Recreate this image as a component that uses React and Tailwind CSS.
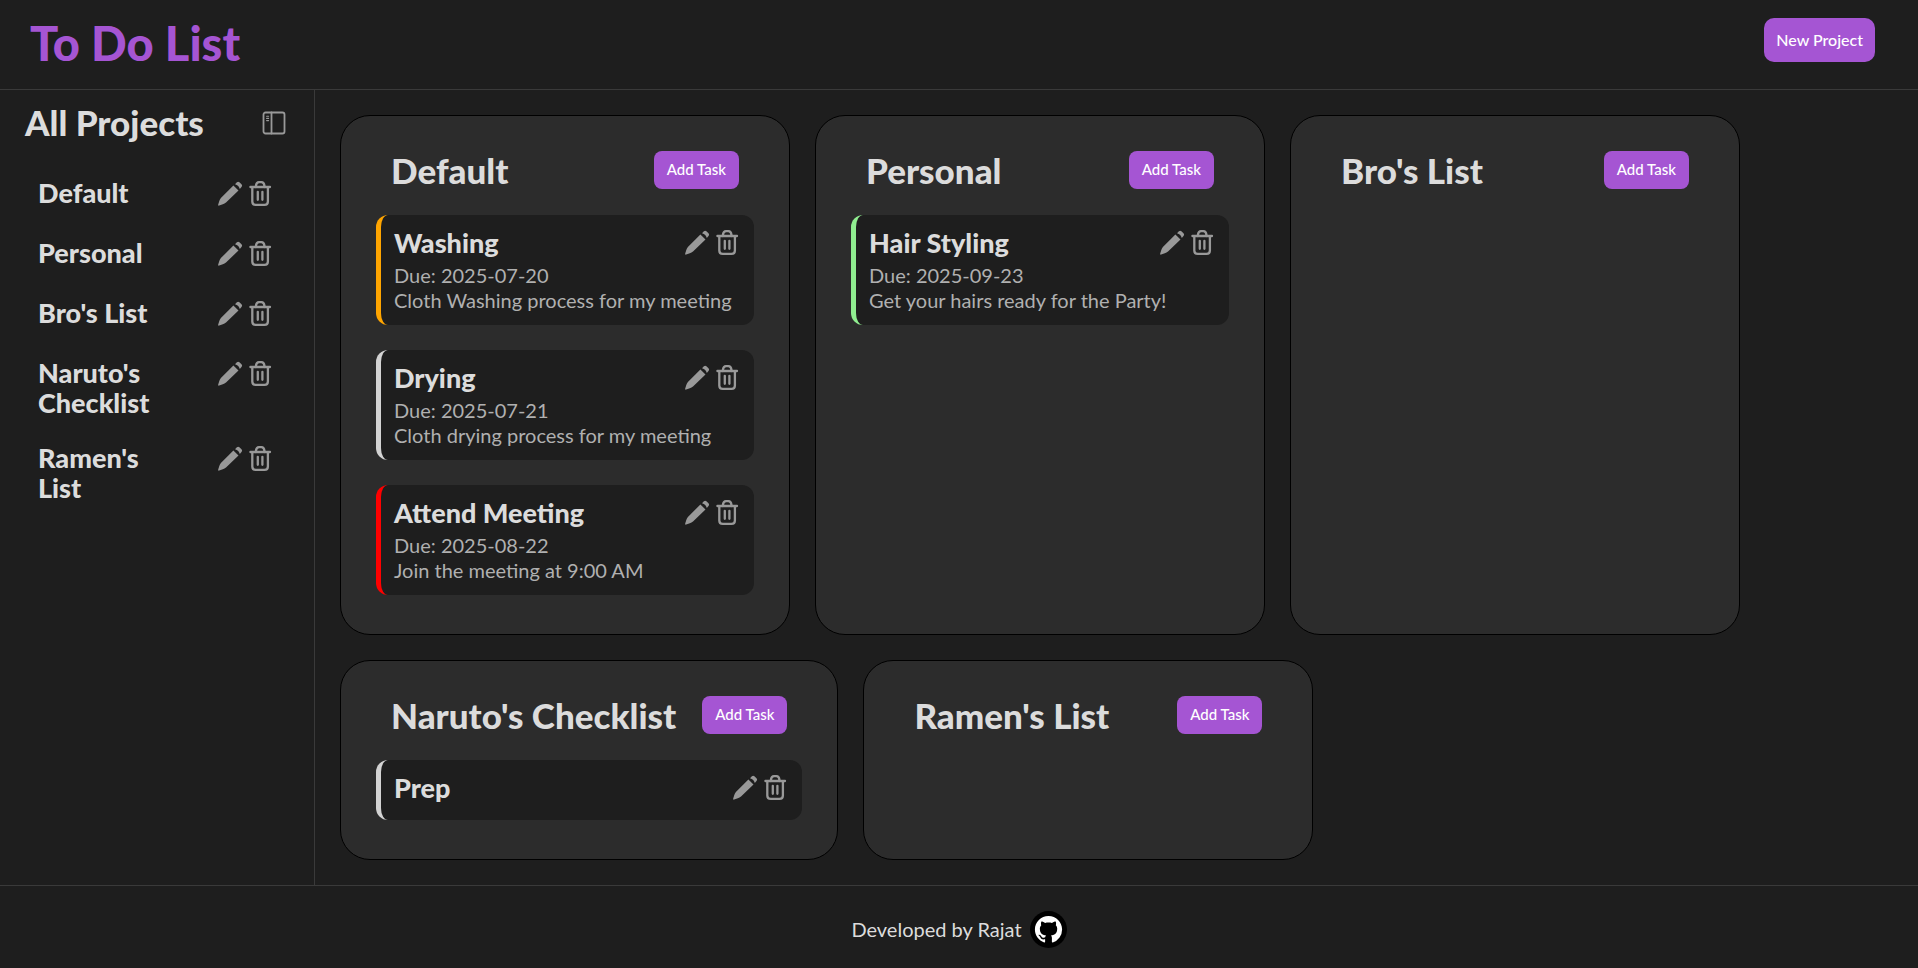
import React from "react";

const projects = [
  {
    name: "Default",
    tasks: [
      { title: "Washing", due: "2025-07-20", note: "Cloth Washing process for my meeting", edge: "border-l-[#ffa500]" },
      { title: "Drying", due: "2025-07-21", note: "Cloth drying process for my meeting", edge: "border-l-[#d3d3d3]" },
      { title: "Attend Meeting", due: "2025-08-22", note: "Join the meeting at 9:00 AM", edge: "border-l-[#ff0000]" },
    ],
  },
  {
    name: "Personal",
    tasks: [
      { title: "Hair Styling", due: "2025-09-23", note: "Get your hairs ready for the Party!", edge: "border-l-[#90ee90]" },
    ],
  },
  { name: "Bro's List", tasks: [] },
  { name: "Naruto's Checklist", tasks: [{ title: "Prep", edge: "border-l-[#d3d3d3]" }] },
  { name: "Ramen's List", tasks: [] },
];

function PencilIcon() {
  return (
    <svg viewBox="0 0 25 25" className="size-[25px]" fill="currentColor" aria-hidden="true">
      <path d="M15.4 4.4 20.5 9.5 8 21.5Q6.6 22.8 4.8 23.3L1.2 24.6Q-.1 24.9.2 23.6L1.3 20Q1.8 18.4 2.9 17.1Z" />
      <path d="M17 3.3 18.9 1.2Q20.2.1 21.4 1.2L23.5 3.2Q24.7 4.5 23.7 5.8L21.8 8.1Q21 4.5 17 3.3Z" />
    </svg>
  );
}

function TrashIcon() {
  return (
    <svg viewBox="0 0 25 25" className="size-[25px]" fill="none" stroke="currentColor" strokeWidth="2.3" strokeLinecap="round" aria-hidden="true">
      <path d="M2.4 6H22" />
      <path d="M7.9 6V5.2Q8.3 1.2 11 1.2H13.4Q16.1 1.2 16.5 5.2V6" />
      <path d="M4.3 6.4V20.4Q4.3 23.8 7.7 23.8H16.5Q19.9 23.8 19.9 20.4V6.4" />
      <path d="M9.8 10.8V18.8M14.4 10.8V18.8" />
    </svg>
  );
}

function PanelIcon() {
  return (
    <svg viewBox="0 0 24 24" className="size-6" fill="none" stroke="currentColor" strokeWidth="1.8" strokeLinecap="round" aria-hidden="true">
      <rect x="1.5" y="1.5" width="21" height="21" rx="2" />
      <path d="M9.5 1.5V22.5" />
      <path d="M4.6 5.2H6.6M4.6 7.4H6.6M4.6 9.6H6.6" strokeWidth="1.1" />
    </svg>
  );
}

function GithubIcon() {
  return (
    <svg viewBox="0 0 37 37" className="size-[37px]" aria-hidden="true">
      <circle cx="18.5" cy="18.5" r="18.5" fill="#000" />
      <g transform="translate(4.9 4.9) scale(1.7)">
        <path
          fill="#fff"
          d="M8 0C3.58 0 0 3.58 0 8c0 3.54 2.29 6.53 5.47 7.59.4.07.55-.17.55-.38 0-.19-.01-.82-.01-1.49-2.01.37-2.53-.49-2.69-.94-.09-.23-.48-.94-.82-1.13-.28-.15-.68-.52-.01-.53.63-.01 1.08.58 1.23.82.72 1.21 1.87.87 2.33.66.07-.52.28-.87.51-1.07-1.78-.2-3.64-.89-3.64-3.95 0-.87.31-1.59.82-2.15-.08-.2-.36-1.02.08-2.12 0 0 .67-.21 2.2.82.64-.18 1.32-.27 2-.27s1.36.09 2 .27c1.53-1.04 2.2-.82 2.2-.82.44 1.1.16 1.92.08 2.12.51.56.82 1.27.82 2.15 0 3.07-1.87 3.75-3.65 3.95.29.25.54.73.54 1.48 0 1.07-.01 1.93-.01 2.2 0 .21.15.46.55.38A8.01 8.01 0 0 0 16 8c0-4.42-3.58-8-8-8Z"
        />
      </g>
    </svg>
  );
}

function ItemActions({ name }) {
  return (
    <div className="flex shrink-0 gap-[5px] text-[#999999]">
      <button type="button" aria-label={`Edit ${name}`} className="cursor-pointer">
        <PencilIcon />
      </button>
      <button type="button" aria-label={`Delete ${name}`} className="cursor-pointer">
        <TrashIcon />
      </button>
    </div>
  );
}

function TaskCard({ task }) {
  return (
    <li className={`rounded-xl border-l-[5px] bg-[#1e1e1e] pt-[15px] pr-[14px] pb-3 pl-[13px] ${task.edge}`}>
      <div className="flex items-start justify-between pb-2">
        <h3 className="text-[27px] leading-[25px] font-black text-[#dcdcdc]">{task.title}</h3>
        <ItemActions name={task.title} />
      </div>
      {task.due && <p className="text-xl leading-[25px] text-[#b0b0b0]">Due: {task.due}</p>}
      {task.note && <p className="text-xl leading-[25px] text-[#b0b0b0]">{task.note}</p>}
    </li>
  );
}

function ProjectCard({ project }) {
  return (
    <section className="flex min-w-[450px] flex-col gap-[25px] rounded-[30px] border border-black bg-[#2c2c2c] px-[35px] pt-[35px] pb-[39px]">
      <div className="flex items-start justify-between gap-[26px] px-[15px]">
        <h2 className="text-[35px] leading-[38px] font-black text-[#dcdcdc]">{project.name}</h2>
        <button type="button" className="mb-px h-[38px] shrink-0 cursor-pointer rounded-lg bg-[#a555d3] px-[13px] pb-[2px] text-[15px] font-medium text-white">
          Add Task
        </button>
      </div>
      {project.tasks.length > 0 && (
        <ul className="flex flex-col gap-[25px]">
          {project.tasks.map((task) => (
            <TaskCard key={task.title} task={task} />
          ))}
        </ul>
      )}
    </section>
  );
}

export default function App() {
  return (
    <div className="flex min-h-screen flex-col bg-[#1e1e1e] font-['Gill_Sans','Gill_Sans_MT',Lato,sans-serif] text-[#dcdcdc]">
      <header className="flex items-start justify-between border-b border-[#3a3a3a] pt-[18px] pr-[43px] pb-[21px] pl-[30px]">
        <h1 className="text-[47px] leading-[50px] font-black text-[#a555d3]">To Do List</h1>
        <button type="button" className="h-11 cursor-pointer rounded-[10px] bg-[#a555d3] px-3 text-base font-medium text-white">
          New Project
        </button>
      </header>

      <div className="flex flex-1">
        <aside className="w-[315px] shrink-0 border-r border-[#3a3a3a] pt-[13px] pl-[25px]">
          <div className="flex items-start justify-between pr-7">
            <h2 className="text-[35px] leading-[38px] font-black">All Projects</h2>
            <button type="button" aria-label="Toggle sidebar" className="cursor-pointer pt-2 text-[#999999]">
              <PanelIcon />
            </button>
          </div>
          <ul className="flex flex-col gap-[25px] pt-[37px] pr-[41px] pl-[13px]">
            {projects.map((project) => (
              <li key={project.name} className="flex min-h-[35px] items-start justify-between">
                <a href="#" className="w-[130px] text-[27px] leading-[30px] font-black">
                  {project.name}
                </a>
                <div className="flex h-[30px] items-center">
                  <ItemActions name={project.name} />
                </div>
              </li>
            ))}
          </ul>
        </aside>

        <main className="flex flex-1 flex-wrap content-start gap-[25px] p-[25px]">
          {projects.map((project) => (
            <ProjectCard key={project.name} project={project} />
          ))}
        </main>
      </div>

      <footer className="flex items-center justify-center gap-2 border-t border-[#3a3a3a] pt-[25px] pb-5">
        <p className="text-xl leading-[25px]">Developed by Rajat</p>
        <a href="#" aria-label="GitHub profile">
          <GithubIcon />
        </a>
      </footer>
    </div>
  );
}
